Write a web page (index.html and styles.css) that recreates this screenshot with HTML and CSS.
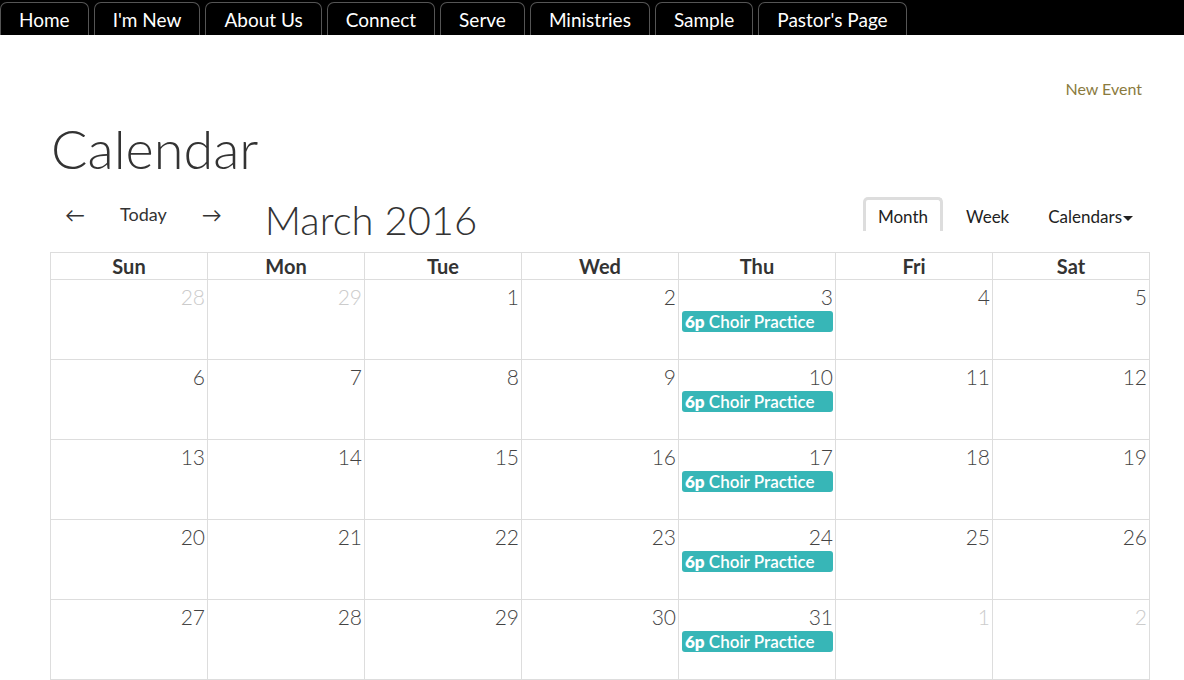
FILE: index.html
```html
<!DOCTYPE html>
<html lang="en">
<head>
  <meta charset="UTF-8">
  <title>Calendar</title>
  <link rel="stylesheet" href="styles.css">
</head>
<body>

  <nav class="topnav">
    <a class="tab" href="#">Home</a>
    <a class="tab" href="#">I'm New</a>
    <a class="tab" href="#">About Us</a>
    <a class="tab" href="#">Connect</a>
    <a class="tab" href="#">Serve</a>
    <a class="tab" href="#">Ministries</a>
    <a class="tab" href="#">Sample</a>
    <a class="tab" href="#">Pastor's Page</a>
  </nav>

  <div class="page">
    <div class="actions">
      <a class="new-event" href="#">New Event</a>
    </div>

    <h1 class="title">Calendar</h1>

    <div class="toolbar">
      <div class="nav-left">
        <a class="arrow" href="#">&larr;</a>
        <a class="today" href="#">Today</a>
        <a class="arrow" href="#">&rarr;</a>
        <span class="month-title">March 2016</span>
      </div>
      <div class="nav-right">
        <a class="view active" href="#">Month</a>
        <a class="view week" href="#">Week</a>
        <a class="view calendars" href="#">Calendars<span class="caret"></span></a>
      </div>
    </div>

    <table class="cal">
      <thead>
        <tr>
          <th>Sun</th><th>Mon</th><th>Tue</th><th>Wed</th><th>Thu</th><th>Fri</th><th>Sat</th>
        </tr>
      </thead>
      <tbody>
        <tr>
          <td><div class="num other">28</div></td>
          <td><div class="num other">29</div></td>
          <td><div class="num">1</div></td>
          <td><div class="num">2</div></td>
          <td><div class="num">3</div><div class="event"><b>6p</b> Choir Practice</div></td>
          <td><div class="num">4</div></td>
          <td><div class="num">5</div></td>
        </tr>
        <tr>
          <td><div class="num">6</div></td>
          <td><div class="num">7</div></td>
          <td><div class="num">8</div></td>
          <td><div class="num">9</div></td>
          <td><div class="num">10</div><div class="event"><b>6p</b> Choir Practice</div></td>
          <td><div class="num">11</div></td>
          <td><div class="num">12</div></td>
        </tr>
        <tr>
          <td><div class="num">13</div></td>
          <td><div class="num">14</div></td>
          <td><div class="num">15</div></td>
          <td><div class="num">16</div></td>
          <td><div class="num">17</div><div class="event"><b>6p</b> Choir Practice</div></td>
          <td><div class="num">18</div></td>
          <td><div class="num">19</div></td>
        </tr>
        <tr>
          <td><div class="num">20</div></td>
          <td><div class="num">21</div></td>
          <td><div class="num">22</div></td>
          <td><div class="num">23</div></td>
          <td><div class="num">24</div><div class="event"><b>6p</b> Choir Practice</div></td>
          <td><div class="num">25</div></td>
          <td><div class="num">26</div></td>
        </tr>
        <tr>
          <td><div class="num">27</div></td>
          <td><div class="num">28</div></td>
          <td><div class="num">29</div></td>
          <td><div class="num">30</div></td>
          <td><div class="num">31</div><div class="event"><b>6p</b> Choir Practice</div></td>
          <td><div class="num other">1</div></td>
          <td><div class="num other">2</div></td>
        </tr>
      </tbody>
    </table>
  </div>

</body>
</html>
```

FILE: styles.css
```css
body {
  margin: 0;
  font-family: Lato, 'Liberation Sans', sans-serif;
  background-color: #fff;
  color: #333;
}

a {
  text-decoration: none;
}

.topnav {
  display: flex;
  align-items: flex-end;
  gap: 5px;
  height: 35px;
  background-color: #000;
}

.tab {
  display: flex;
  align-items: center;
  height: 32px;
  padding: 0 18px;
  border: 1px solid #555;
  border-bottom: none;
  border-radius: 7px 7px 0 0;
  color: #fff;
  font-size: 19px;
}

.page {
  padding: 0 34px 0 50px;
}

.actions {
  display: flex;
  justify-content: flex-end;
  padding: 44px 8px 0 0;
}

.new-event {
  color: #8a7a3e;
  font-size: 16px;
}

.title {
  margin: 18px 0 0 1px;
  font-size: 54px;
  font-weight: 300;
  line-height: 66px;
  color: #333;
}

.toolbar {
  display: flex;
  justify-content: space-between;
  align-items: flex-end;
  margin: 12px 0 6px;
  height: 52px;
}

.nav-left {
  display: flex;
  align-items: center;
  height: 52px;
}

.arrow {
  padding: 0 15px;
  font-size: 20px;
  color: #333;
  margin-bottom: 12px;
}

.today {
  padding: 0 20px;
  font-size: 18px;
  color: #333;
  margin-bottom: 12px;
}

.month-title {
  margin-left: 28px;
  font-size: 40px;
  font-weight: 300;
  color: #333;
}

.nav-right {
  display: flex;
  align-items: flex-end;
  padding: 0 2px 15px 0;
}

.view {
  padding: 6px 12px 4px;
  font-size: 17px;
  color: #222;
  border: 3px solid transparent;
  border-bottom: none;
  border-radius: 5px 5px 0 0;
}

.view.active {
  border-color: #ddd;
}

.view.week {
  margin-left: 8px;
}

.view.calendars {
  margin-left: 9px;
}

.caret {
  display: inline-block;
  margin-left: 1px;
  vertical-align: middle;
  border-top: 5px solid #222;
  border-left: 5px solid transparent;
  border-right: 5px solid transparent;
}

.cal {
  width: 1100px;
  border-collapse: collapse;
  table-layout: fixed;
}

.cal th {
  height: 26px;
  padding: 0;
  border: 1px solid #ddd;
  font-size: 20px;
  font-weight: 700;
  color: #333;
}

.cal td {
  height: 79px;
  padding: 0;
  border: 1px solid #ddd;
  vertical-align: top;
}

.num {
  padding: 4px 2px 0 0;
  text-align: right;
  font-size: 21px;
  font-weight: 300;
  line-height: 25px;
  color: #444;
}

.num.other {
  color: #ccc;
}

.event {
  margin: 2px 2px 0 3px;
  padding: 0 3px;
  height: 21px;
  line-height: 21px;
  border-radius: 3px;
  background-color: #37b6b7;
  color: #fff;
  font-size: 17px;
  font-weight: 600;
  white-space: nowrap;
  overflow: hidden;
}

.event b {
  font-weight: 800;
}
```
